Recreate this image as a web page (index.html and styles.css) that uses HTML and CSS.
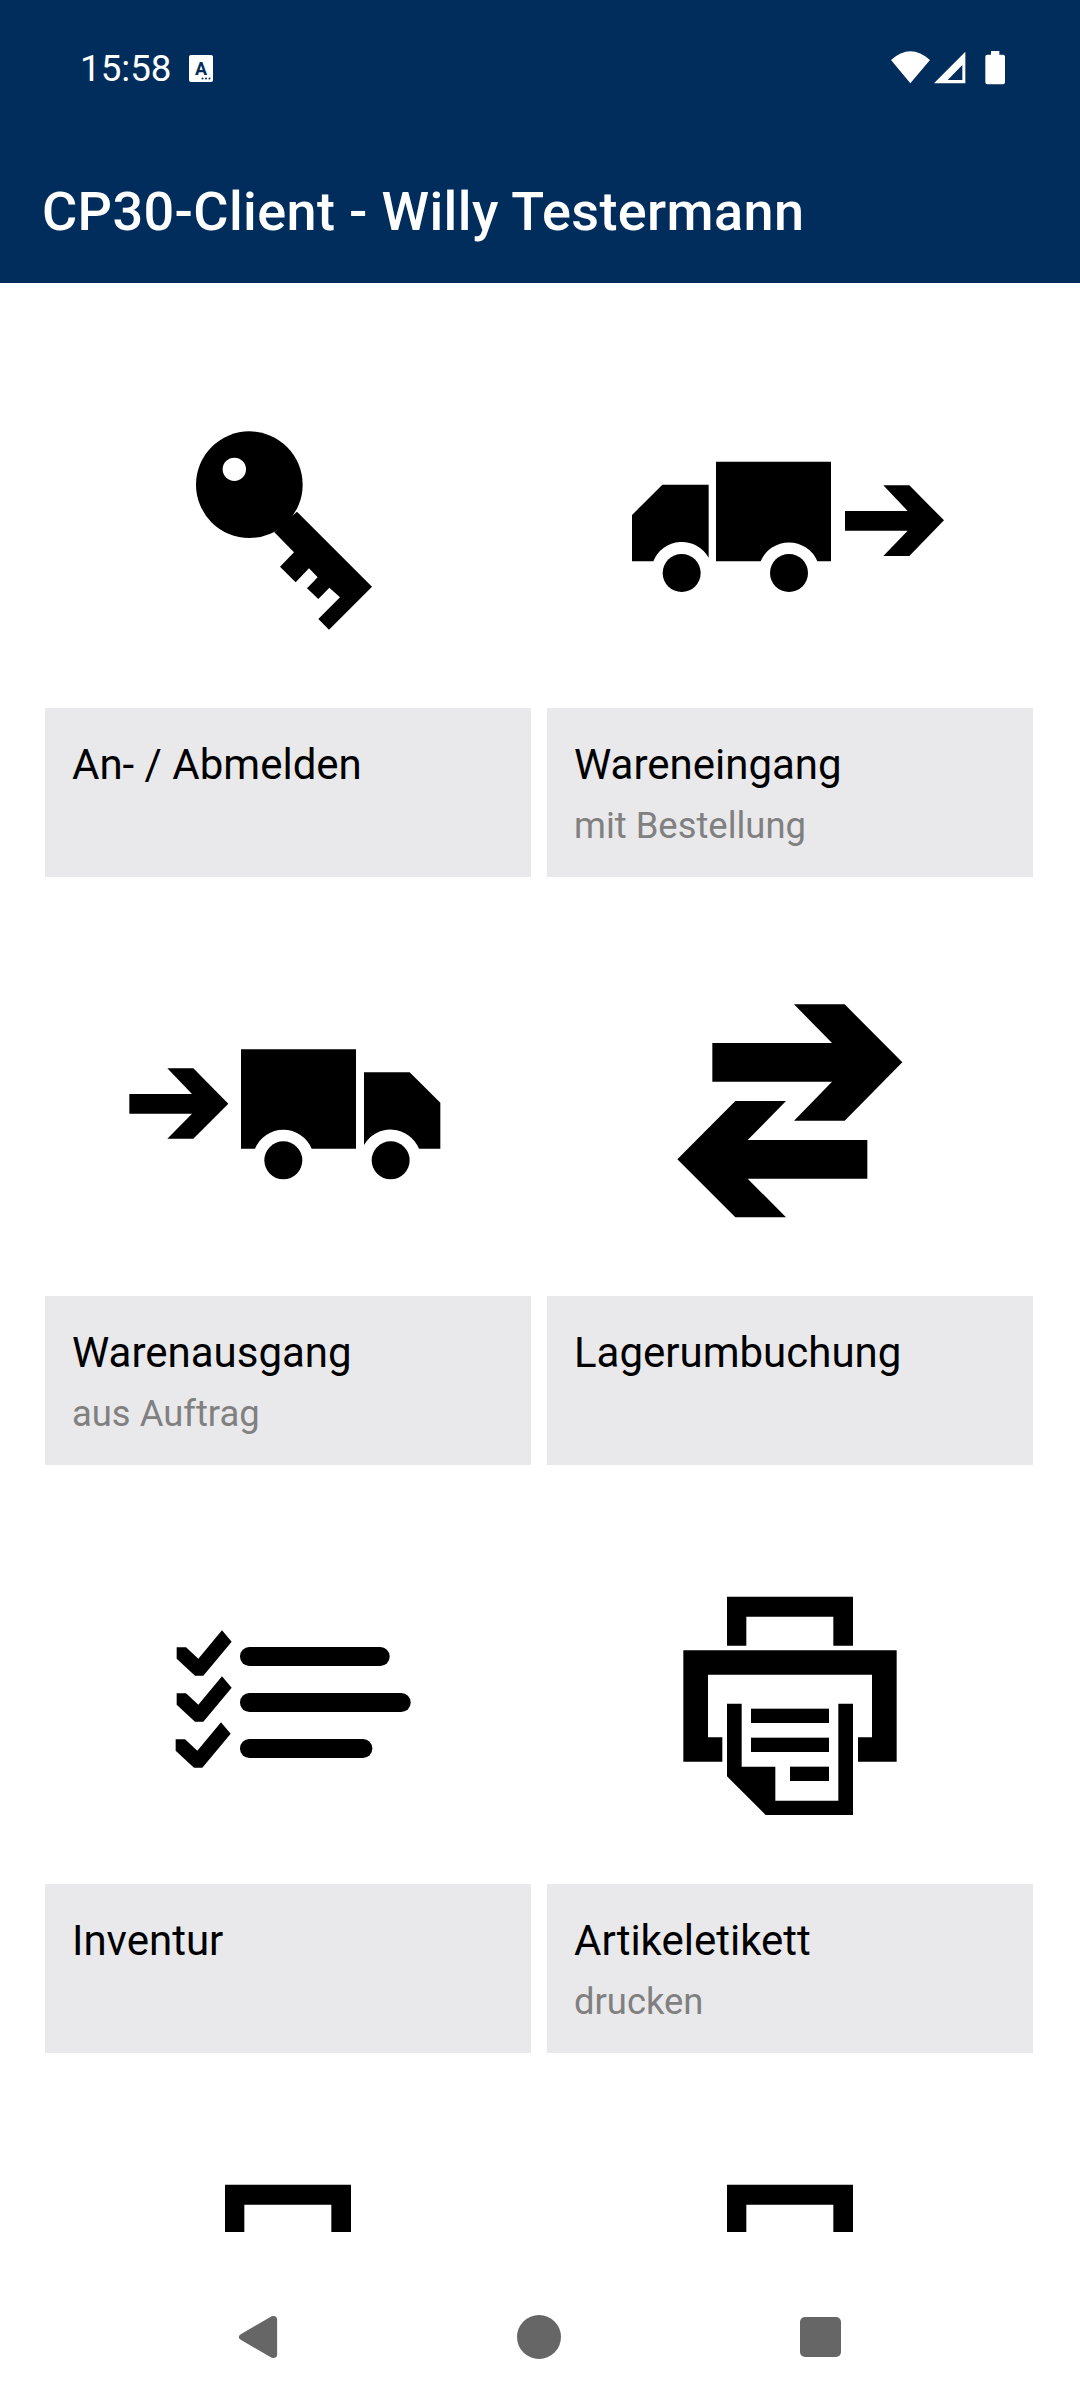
FILE: index.html
```html
<!DOCTYPE html>
<html lang="de">
<head>
<meta charset="utf-8">
<title>CP30-Client</title>
<link rel="stylesheet" href="styles.css">
</head>
<body>
<div class="app">
  <header class="appbar">
    <div class="statusbar">
      <div class="status-left">
        <span class="time">15:58</span>
        <svg class="status-a" viewBox="0 0 24 27">
          <rect class="s-white" width="24" height="27" rx="2"/>
          <text class="s-a" x="12" y="20" text-anchor="middle">A</text>
          <circle class="s-navy" cx="13.5" cy="23.5" r="1"/>
          <circle class="s-navy" cx="17" cy="23.5" r="1"/>
          <circle class="s-navy" cx="20.5" cy="23.5" r="1"/>
        </svg>
      </div>
      <svg class="status-right" viewBox="0 0 420 180">
        <path class="s-white" d="M33 60Q91 8 150 60L91 130Z"/>
        <path class="s-white" fill-rule="evenodd" d="M162 130L256 35V130ZM203 120H247V75Z"/>
        <path class="s-white" d="M333 44V33H358V44H369Q375 44 375 50V127Q375 133 369 133H322Q316 133 316 127V50Q316 44 322 44Z"/>
      </svg>
    </div>
    <div class="toolbar"><h1 class="title">CP30-Client - Willy Testermann</h1></div>
  </header>

  <main class="content">
    <div class="grid">
      <section class="item">
        <svg class="icon" viewBox="-315 -333 1458 1257">
          <circle class="i-fill" cx="298" cy="254" r="160"/>
          <circle class="i-hole" cx="253" cy="208" r="35"/>
          <path class="i-fill" d="M441 335L666 560L537 689L505 657L570 592L538 563L505 597L471 565L503 532L477 505L437 547L390 500L432 457L373 397Z"/>
        </svg>
        <div class="card"><div class="card-title">An- / Abmelden</div></div>
      </section>
      <section class="item">
        <svg class="icon" viewBox="-189 -423 1458 1257">
          <path class="i-fill" d="M66 394V255L157 164H296V383A92 92 0 0 0 130 394Z"/>
          <path class="i-fill" d="M318 95H663V394H622A92 92 0 0 0 452 394H318Z"/>
          <circle class="i-fill" cx="215" cy="429" r="57"/>
          <circle class="i-fill" cx="537" cy="429" r="57"/>
          <path class="i-fill" d="M705 243H893L820 166H898L1002 271L898 378H820L893 302H705Z"/>
        </svg>
        <div class="card"><div class="card-title">Wareneingang</div><div class="card-sub">mit Bestellung</div></div>
      </section>
      <section class="item">
        <svg class="icon" viewBox="-195 -459 1458 1257">
          <path class="i-fill" d="M58 192H246L172 115H250L355 221L250 326H172L246 251H58Z"/>
          <path class="i-fill" d="M393 58H738V356H605A92 92 0 0 0 435 356H393Z"/>
          <path class="i-fill" d="M762 127H899L991 218V356H927A92 92 0 0 0 762 345Z"/>
          <circle class="i-fill" cx="520" cy="391" r="57"/>
          <circle class="i-fill" cx="842" cy="391" r="57"/>
        </svg>
        <div class="card"><div class="card-title">Warenausgang</div><div class="card-sub">aus Auftrag</div></div>
      </section>
      <section class="item">
        <svg class="icon" viewBox="-339 -339 1458 1257">
          <path class="i-fill" d="M157 159H516L402 43H554L727 217L554 392H402L516 275H157Z"/>
          <path class="i-fill" d="M622 450H263L378 333H226L52 508L226 682H378L263 566H622Z"/>
        </svg>
        <div class="card"><div class="card-title">Lagerumbuchung</div></div>
      </section>
      <section class="item">
        <svg class="icon" viewBox="-345 -435 1458 1257">
          <path class="i-fill" d="M50 146V112H78L115 146L186 61L215 95L130 197H105Z"/>
          <path class="i-fill" d="M50 284V250H78L115 284L186 199L215 233L130 335H105Z"/>
          <path class="i-fill" d="M47 422V388H75L112 422L183 337L212 371L127 473H102Z"/>
          <rect class="i-fill" x="240" y="111" width="449" height="57" rx="28"/>
          <rect class="i-fill" x="240" y="249" width="512" height="57" rx="28"/>
          <rect class="i-fill" x="240" y="387" width="397" height="57" rx="28"/>
        </svg>
        <div class="card"><div class="card-title">Inventur</div></div>
      </section>
      <section class="item">
        <svg class="icon" viewBox="-369 -345 1458 1257">
          <path class="i-fill" d="M171 197V50H549V197H490V110H229V197Z"/>
          <path class="i-fill" d="M40 211H680V545H564V472H606V284H114V472H157V545H40Z"/>
          <path class="i-fill" d="M171 371H215V560H316V662H505V371H549V705H287L171 589Z"/>
          <rect class="i-fill" x="243" y="386" width="234" height="43"/>
          <rect class="i-fill" x="243" y="473" width="234" height="43"/>
          <rect class="i-fill" x="360" y="560" width="117" height="43"/>
        </svg>
        <div class="card"><div class="card-title">Artikeletikett</div><div class="card-sub">drucken</div></div>
      </section>
      <section class="item">
        <svg class="icon" viewBox="-369 -345 1458 1257">
          <path class="i-fill" d="M171 197V50H549V197H490V110H229V197Z"/>
          <path class="i-fill" d="M40 211H680V545H564V472H606V284H114V472H157V545H40Z"/>
        </svg>
      </section>
      <section class="item">
        <svg class="icon" viewBox="-369 -345 1458 1257">
          <path class="i-fill" d="M171 197V50H549V197H490V110H229V197Z"/>
          <path class="i-fill" d="M40 211H680V545H564V472H606V284H114V472H157V545H40Z"/>
        </svg>
      </section>
    </div>
  </main>

  <nav class="navbar">
    <svg class="nav-back" viewBox="0 0 40 46"><path class="n-fill" d="M36 1Q40 1 40 5V41Q40 45 36 45Q34 45 33 44L2 26Q0 25 0 23Q0 21 2 20L33 2Q34 1 36 1Z"/></svg>
    <div class="nav-home"></div>
    <div class="nav-recent"></div>
  </nav>
</div>
</body>
</html>
```
FILE: styles.css
```css
* { box-sizing: border-box; }
html, body { margin: 0; padding: 0; background: #fff; }
body { font-family: Roboto, "Noto Sans", sans-serif; }

.app { width: 1080px; height: 2400px; display: flex; flex-direction: column; overflow: hidden; }

.appbar { height: 283px; background: #002d5c; color: #fff; flex: none; }
.statusbar { height: 140px; display: flex; align-items: center; justify-content: space-between; padding: 0 60px 0 80px; }
.status-left { display: flex; align-items: center; gap: 17px; margin-bottom: 3px; }
.time { font-size: 36.75px; line-height: 40px; }
.status-a { width: 24px; height: 27px; display: block; }
.status-right { width: 140px; height: 60px; display: block; }
.s-white { fill: #fff; }
.s-navy { fill: #002d5c; }
.s-a { fill: #002d5c; font-family: Roboto, sans-serif; font-weight: 700; font-size: 18px; }

.toolbar { height: 143px; display: flex; align-items: center; padding-left: 42px; }
.title { margin: 0; font-size: 54px; font-weight: 500; line-height: 64px; letter-spacing: 0.37px; }

.content { flex: 1; min-height: 0; overflow: hidden; padding: 6px 47px 0 45px; }
.grid { display: grid; grid-template-columns: 486px 486px; column-gap: 16px; }
.item { height: 588px; }
.icon { display: block; width: 486px; height: 419px; }
.i-fill { fill: #000; }
.i-hole { fill: #fff; }

.card { height: 169px; background: #e9e9eb; padding: 30.5px 27px 0; }
.card-title { font-size: 42px; line-height: 52px; color: #000; }
.card-sub { margin-top: 12px; font-size: 36.4px; line-height: 45px; color: #808080; }

.navbar { height: 168px; flex: none; background: #fff; display: flex; align-items: center; padding: 42px 239px 0 238px; justify-content: space-between; }
.nav-back { width: 40px; height: 44px; display: block; }
.n-fill { fill: #666; }
.nav-home { width: 44px; height: 44px; border-radius: 50%; background: #666; }
.nav-recent { width: 41px; height: 40px; border-radius: 5px; background: #666; }
```
